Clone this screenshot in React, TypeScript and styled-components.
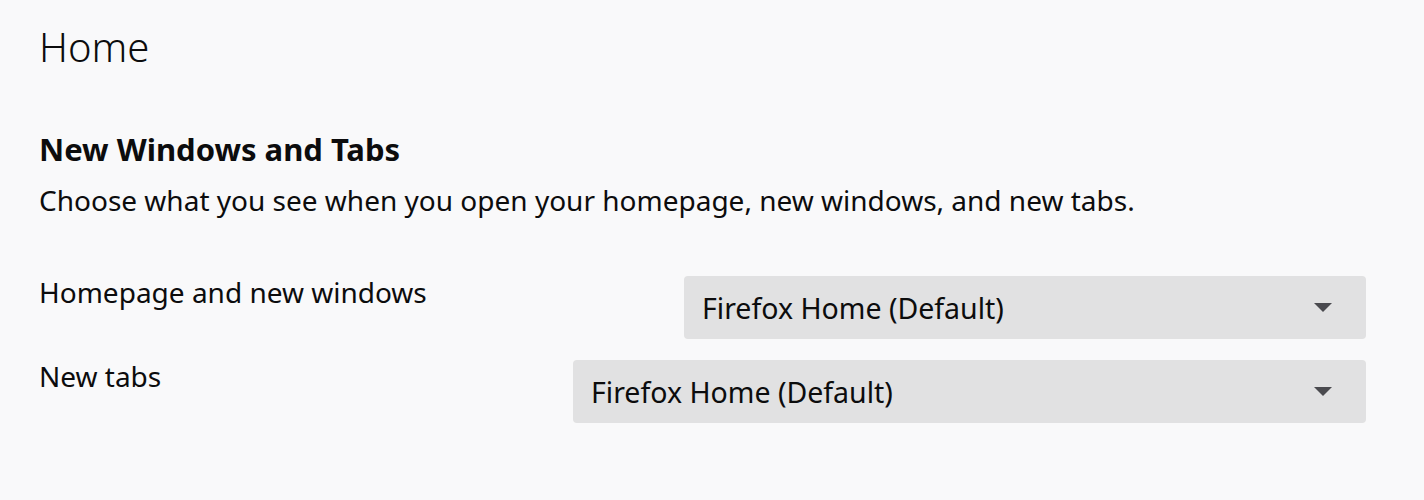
import React from "react";
import styled, { createGlobalStyle } from "styled-components";

const Global = createGlobalStyle`
  html, body { margin: 0; padding: 0; background: #f9f9fa; }
  body { font-family: "Noto Sans", "Open Sans", sans-serif; color: #0c0c0d; }
`;

const Page = styled.main`
  width: 1424px;
  height: 500px;
  box-sizing: border-box;
  padding: 21px 58px 0 39px;
  display: flex;
  flex-direction: column;
`;

const Title = styled.h1`
  margin: 0;
  font-size: 40px;
  font-weight: 300;
  line-height: 52px;
`;

const SectionTitle = styled.h2`
  margin: 56px 0 0;
  font-size: 31px;
  font-weight: 700;
  line-height: 40px;
`;

const Description = styled.p`
  margin: 13px 0 0;
  font-size: 28px;
  line-height: 36px;
`;

const Rows = styled.div`
  margin-top: 58px;
  display: flex;
  flex-direction: column;
  gap: 21px;
`;

const Row = styled.div`
  display: flex;
  justify-content: space-between;
  align-items: flex-start;
`;

const Label = styled.label`
  font-size: 28px;
  line-height: 32px;
`;

const Select = styled.div<{ $width: number }>`
  width: ${(p) => p.$width}px;
  height: 63px;
  box-sizing: border-box;
  background: #e1e1e2;
  border-radius: 4px;
  padding: 0 34px 0 18px;
  display: flex;
  align-items: center;
  justify-content: space-between;
  font-size: 28.5px;
`;

const Arrow = () => (
  <svg width="18" height="10" viewBox="0 0 18 10">
    <path d="M0 0 H18 L9 9 Z" fill="#4a4a4f" />
  </svg>
);

export default function App() {
  return (
    <>
      <Global />
      <Page>
        <Title>Home</Title>
        <SectionTitle>New Windows and Tabs</SectionTitle>
        <Description>
          Choose what you see when you open your homepage, new windows, and new tabs.
        </Description>
        <Rows>
          <Row>
            <Label>Homepage and new windows</Label>
            <Select $width={682}>
              <span>Firefox Home (Default)</span>
              <Arrow />
            </Select>
          </Row>
          <Row>
            <Label>New tabs</Label>
            <Select $width={793}>
              <span>Firefox Home (Default)</span>
              <Arrow />
            </Select>
          </Row>
        </Rows>
      </Page>
    </>
  );
}
